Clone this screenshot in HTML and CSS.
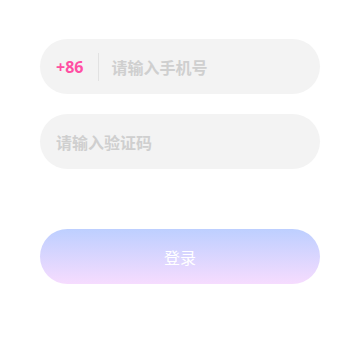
FILE: index.html
```html
<!DOCTYPE html>
<html lang="zh-CN">
<head>
    <meta charset="UTF-8">
    <title>登录</title>
    <meta name="viewport" content="width=device-width, initial-scale=1.0"/>
    <link rel="stylesheet" href="styles.css">
</head>
<body>
    <div class="login">
        <div class="field">
            <span class="area-code">+86</span>
            <span class="divider"></span>
            <input class="input" type="tel" placeholder="请输入手机号">
        </div>
        <div class="field">
            <input class="input" type="text" placeholder="请输入验证码">
        </div>
        <button class="login-btn">登录</button>
    </div>
</body>
</html>
```

FILE: styles.css
```css
body {
    margin: 0;
    background: #fff;
    font-family: "Noto Sans CJK SC", "Liberation Sans", sans-serif;
}
.login {
    width: 280px;
    margin: 0 auto;
    padding-top: 39px;
    display: flex;
    flex-direction: column;
}
.field {
    height: 55px;
    background: #f3f3f3;
    border-radius: 28px;
    display: flex;
    align-items: center;
    padding: 0 16px;
    margin-bottom: 20px;
}
.area-code {
    color: #ff4fa3;
    font-family: "Open Sans", sans-serif;
    font-weight: bold;
    font-size: 16px;
}
.divider {
    flex-shrink: 0;
    width: 1px;
    height: 28px;
    background: #e2e2e2;
    margin: 0 12px 0 15px;
}
.input {
    flex: 1;
    min-width: 0;
    border: none;
    outline: none;
    background: transparent;
    font-family: inherit;
    font-size: 16px;
    font-weight: bold;
    padding: 0;
}
.input::placeholder {
    color: #cfcfcf;
}
.login-btn {
    margin-top: 40px;
    height: 55px;
    border: none;
    border-radius: 28px;
    background: linear-gradient(#bdcfff, #f6dcfe);
    color: #fff;
    font-family: inherit;
    font-size: 16px;
}
```
